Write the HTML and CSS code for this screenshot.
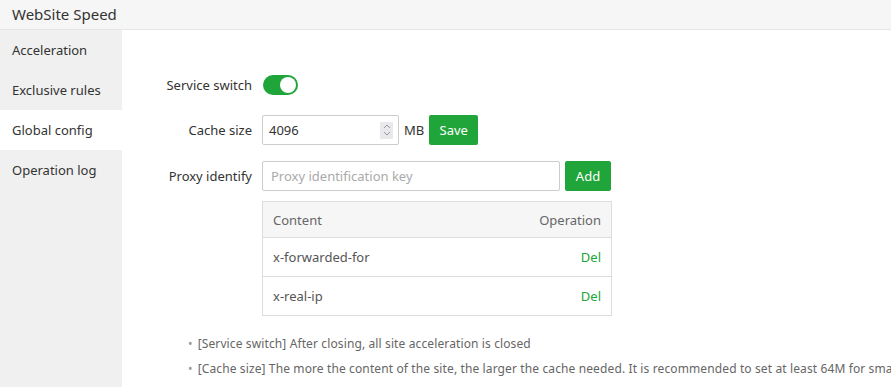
FILE: index.html
```html
<!DOCTYPE html>
<html lang="en">
<head>
    <meta charset="UTF-8">
    <title>WebSite Speed</title>
    <link rel="stylesheet" href="styles.css">
</head>
<body>
    <header class="top-bar">WebSite Speed</header>

    <div class="layout">
        <aside class="side-menu">
            <div class="menu-item">Acceleration</div>
            <div class="menu-item">Exclusive rules</div>
            <div class="menu-item active">Global config</div>
            <div class="menu-item">Operation log</div>
        </aside>

        <main class="panel">
            <!-- 表单区域 -->
            <div class="form-row row-switch">
                <label class="form-label">Service switch</label>
                <div class="switch on"><span class="knob"></span></div>
            </div>

            <div class="form-row row-cache">
                <label class="form-label">Cache size</label>
                <div class="num-input">
                    <span class="num-value">4096</span>
                    <span class="spinner">
                        <svg width="8" height="14" viewBox="0 0 8 14">
                            <path d="M1 5 L4 2 L7 5" fill="none" stroke="#999" stroke-width="1"/>
                            <path d="M1 9 L4 12 L7 9" fill="none" stroke="#999" stroke-width="1"/>
                        </svg>
                    </span>
                </div>
                <span class="unit">MB</span>
                <button class="btn-green">Save</button>
            </div>

            <div class="form-row row-proxy">
                <label class="form-label">Proxy identify</label>
                <input class="text-input" type="text" placeholder="Proxy identification key">
                <button class="btn-green btn-add">Add</button>
            </div>

            <div class="form-row">
                <span class="form-label"></span>
                <table class="proxy-table">
                    <thead>
                        <tr><th>Content</th><th class="right">Operation</th></tr>
                    </thead>
                    <tbody>
                        <tr><td>x-forwarded-for</td><td class="right"><a href="#">Del</a></td></tr>
                        <tr><td>x-real-ip</td><td class="right"><a href="#">Del</a></td></tr>
                    </tbody>
                </table>
            </div>

            <ul class="tips">
                <li>[Service switch] After closing, all site acceleration is closed</li>
                <li>[Cache size] The more the content of the site, the larger the cache needed. It is recommended to set at least 64M for small sites</li>
            </ul>
        </main>
    </div>
</body>
</html>
```

FILE: styles.css
```css
* {
    margin: 0;
    padding: 0;
    box-sizing: border-box;
}

body {
    font-family: 'Noto Sans', 'Open Sans', sans-serif;
    font-size: 13px;
    color: #333;
    background: #fff;
    overflow: hidden;
    height: 387px;
}

.top-bar {
    height: 30px;
    line-height: 28px;
    padding-left: 12px;
    font-size: 15px;
    color: #333;
    background: #f6f6f6;
    border-bottom: 1px solid #e6e6e6;
}

.layout {
    display: flex;
    height: 357px;
}

/* 左侧菜单 */
.side-menu {
    width: 122px;
    flex-shrink: 0;
    background: #f0f0f0;
}

.menu-item {
    height: 40px;
    line-height: 40px;
    padding-left: 12px;
    font-size: 13px;
    color: #333;
}

.menu-item.active {
    background: #fff;
}

.panel {
    flex: 1;
    padding-top: 45px;
    padding-left: 40px;
    white-space: nowrap;
    overflow: hidden;
}

.form-row {
    display: flex;
    align-items: center;
}

.row-switch {
    margin-bottom: 20px;
}

.row-cache {
    margin-bottom: 16px;
}

.row-proxy {
    margin-bottom: 10px;
}

.form-label {
    width: 100px;
    text-align: right;
    padding-right: 10px;
    flex-shrink: 0;
}

/* 开关 */
.switch {
    width: 35px;
    height: 20px;
    border-radius: 10px;
    background: #20a53a;
    position: relative;
    margin-left: 1px;
}

.switch .knob {
    position: absolute;
    top: 2px;
    right: 2px;
    width: 16px;
    height: 16px;
    border-radius: 50%;
    background: #fff;
}

.num-input {
    width: 137px;
    height: 30px;
    border: 1px solid #ccc;
    border-radius: 2px;
    display: flex;
    align-items: center;
    justify-content: space-between;
    padding: 0 5px 0 6px;
}

.spinner {
    width: 13px;
    height: 17px;
    background: #e8e8ed;
    display: flex;
    align-items: center;
    justify-content: center;
}

.unit {
    margin: 0 5px;
}

.btn-green {
    height: 30px;
    width: 49px;
    border: none;
    border-radius: 2px;
    background: #20a53a;
    color: #fff;
    font-family: inherit;
    font-size: 13px;
}

.text-input {
    width: 298px;
    height: 30px;
    border: 1px solid #ccc;
    border-radius: 2px;
    padding: 0 8px;
    font-family: inherit;
    font-size: 13px;
    color: #333;
}

.text-input::placeholder {
    color: #aaa;
}

.btn-add {
    margin-left: 5px;
    width: 46px;
}

.proxy-table {
    width: 350px;
    border-collapse: collapse;
    border: 1px solid #ddd;
    font-size: 13px;
}

.proxy-table th {
    height: 36px;
    background: #f6f6f6;
    font-weight: normal;
    color: #666;
    text-align: left;
    padding: 0 10px;
    border-bottom: 1px solid #ddd;
}

.proxy-table td {
    height: 39px;
    padding: 0 10px;
    color: #555;
    border-bottom: 1px solid #ddd;
}

.proxy-table .right {
    text-align: right;
}

.proxy-table a {
    color: #20a53a;
    text-decoration: none;
}

.tips {
    list-style: none;
    margin-top: 15px;
    padding-left: 26px;
    font-size: 12px;
    color: #666;
}

.tips li {
    line-height: 25px;
    letter-spacing: 0.12px;
}

.tips li::before {
    content: "•";
    color: #999;
    margin-right: 5px;
}
```
